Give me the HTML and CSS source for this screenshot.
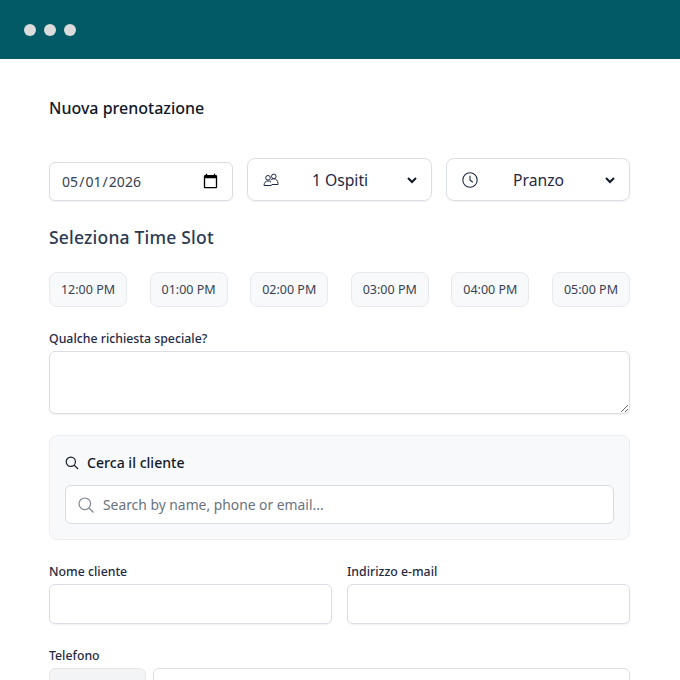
FILE: index.html
```html
<!DOCTYPE html>
<html lang="it">
<head>
    <meta charset="UTF-8">
    <meta name="viewport" content="width=device-width, initial-scale=1.0">
    <title>Nuova prenotazione</title>
    <link rel="stylesheet" href="styles.css">
</head>
<body>
    <header class="topbar">
        <span class="dot"></span>
        <span class="dot"></span>
        <span class="dot"></span>
    </header>

    <main class="content">
        <h1 class="page-title">Nuova prenotazione</h1>

        <div class="filters">
            <input class="date-input" type="date" value="2026-05-01">
            <div class="select-box">
                <svg class="select-icon" width="16" height="16" viewBox="0 0 16 16" fill="none" stroke="#1f2a44" stroke-width="1">
                    <circle cx="5" cy="5.800" r="2.300"/>
                    <circle cx="10.800" cy="4.400" r="2.300"/>
                    <path d="M1 13.500c0-2.600 1.600-4.600 4-4.600 1.200 0 2.200.5 3 1.300M1 13.500h7.500M7.600 8.300c.8-1 1.900-1.500 3.200-1.500 2.400 0 4.200 2 4.200 4.600v1.100H8.500"/>
                </svg>
                <span class="select-text">1 Ospiti</span>
                <svg class="chevron" width="12" height="8" viewBox="0 0 12 8" fill="none" stroke="#111827" stroke-width="2"><path d="M2 2l4 4 4-4"/></svg>
            </div>
            <div class="select-box">
                <svg class="select-icon" width="16" height="16" viewBox="0 0 16 16" fill="none" stroke="#1f2a44" stroke-width="1.100"><circle cx="8" cy="8" r="7.200"/><path d="M8 3.800V8l2.800 2.200"/></svg>
                <span class="select-text">Pranzo</span>
                <svg class="chevron" width="12" height="8" viewBox="0 0 12 8" fill="none" stroke="#111827" stroke-width="2"><path d="M2 2l4 4 4-4"/></svg>
            </div>
        </div>

        <h2 class="section-title">Seleziona Time Slot</h2>

        <div class="slots">
            <button class="slot">12:00 PM</button>
            <button class="slot">01:00 PM</button>
            <button class="slot">02:00 PM</button>
            <button class="slot">03:00 PM</button>
            <button class="slot">04:00 PM</button>
            <button class="slot">05:00 PM</button>
        </div>

        <label class="field-label" for="richiesta">Qualche richiesta speciale?</label>
        <textarea class="notes" id="richiesta"></textarea>

        <section class="search-panel">
            <div class="search-title">
                <svg width="14" height="14" viewBox="0 0 14 14" fill="none" stroke="#111827" stroke-width="1.200"><circle cx="5.800" cy="5.800" r="4.600"/><path d="M9.200 9.200 13 13"/></svg>
                <span>Cerca il cliente</span>
            </div>
            <div class="search-box">
                <svg width="16" height="16" viewBox="0 0 16 16" fill="none" stroke="#7b8494" stroke-width="1.200"><circle cx="6.800" cy="6.800" r="5.800"/><path d="M11 11l4.500 4.500"/></svg>
                <input class="search-input" type="text" placeholder="Search by name, phone or email...">
            </div>
        </section>

        <div class="two-cols">
            <div>
                <label class="field-label" for="nome">Nome cliente</label>
                <input class="text-input" id="nome" type="text">
            </div>
            <div>
                <label class="field-label" for="email">Indirizzo e-mail</label>
                <input class="text-input" id="email" type="text">
            </div>
        </div>

        <label class="field-label phone-label" for="telefono">Telefono</label>
        <div class="phone-row">
            <div class="prefix"></div>
            <input class="text-input" id="telefono" type="text">
        </div>
    </main>
</body>
</html>
```

FILE: styles.css
```css
* {
    box-sizing: border-box;
}
html, body {
    height: 680px;
    overflow: hidden;
}
body {
    margin: 0;
    font-family: "Noto Sans", sans-serif;
    background-color: #fff;
    color: #1f2a44;
}
.topbar {
    height: 59px;
    background-color: #025a66;
    padding-left: 24px;
    display: flex;
    align-items: center;
    gap: 8px;
}
.dot {
    width: 12px;
    height: 12px;
    border-radius: 50%;
    background-color: #dcdcdc;
}
.content {
    padding: 38px 50px 0 49px;
}
.page-title {
    margin: 0;
    font-size: 16px;
    line-height: 22px;
    font-weight: 500;
    color: #111827;
}
.filters {
    display: grid;
    grid-template-columns: 184px 185px 184px;
    justify-content: space-between;
    align-items: end;
    margin-top: 39px;
    height: 43px;
}
.date-input {
    height: 39px;
    padding: 0 12px 0 11px;
    border: 1px solid #dcdee6;
    border-radius: 6px;
    background: #fff;
    font-family: inherit;
    font-size: 14px;
    letter-spacing: 0.05px;
    color: #374151;
    box-shadow: 0 1px 2px rgba(0, 0, 0, 0.06);
}
.date-input::-webkit-calendar-picker-indicator {
    width: 17px;
    height: 17px;
    padding: 0;
    margin-right: 1px;
}
.select-box {
    height: 43px;
    padding: 0 13px 0 15px;
    border: 1px solid #dcdee6;
    border-radius: 8px;
    display: flex;
    align-items: center;
    box-shadow: 0 1px 2px rgba(0, 0, 0, 0.06);
}
.select-text {
    flex: 1;
    padding-right: 5px;
    text-align: center;
    font-size: 15.700px;
}
.section-title {
    margin: 24px 0 0;
    font-size: 17.500px;
    line-height: 24px;
    font-weight: 500;
    letter-spacing: 0.2px;
    color: #2a3a52;
}
.slots {
    display: flex;
    justify-content: space-between;
    margin-top: 23px;
}
.slot {
    width: 78px;
    height: 35px;
    padding: 0;
    border: 1px solid #e7e9ef;
    border-radius: 8px;
    background-color: #f8f9fb;
    font-family: inherit;
    font-size: 12.500px;
    color: #374151;
}
.field-label {
    display: block;
    font-size: 12.300px;
    line-height: 16px;
    font-weight: 500;
    color: #1f2a44;
}
.slots + .field-label {
    margin-top: 24px;
}
.notes {
    display: block;
    width: 100%;
    height: 63px;
    margin-top: 4px;
    border: 1px solid #dcdee6;
    border-radius: 6px;
    box-shadow: 0 1px 2px rgba(0, 0, 0, 0.06);
}
.search-panel {
    height: 105px;
    margin-top: 21px;
    padding: 15px;
    border: 1px solid #eceef2;
    border-radius: 8px;
    background-color: #f8f9fb;
}
.search-title {
    display: flex;
    align-items: center;
    gap: 8px;
    height: 23px;
    margin-bottom: 11px;
    font-size: 14.100px;
    font-weight: 500;
    color: #111827;
}
.search-box {
    height: 39px;
    padding: 0 12px;
    display: flex;
    align-items: center;
    gap: 9px;
    border: 1px solid #d9dbe3;
    border-radius: 6px;
    background-color: #fff;
}
.search-input {
    flex: 1;
    padding-left: 0;
    border: none;
    outline: none;
    background: none;
    font-family: inherit;
    font-size: 13.850px;
}
.search-input::placeholder {
    color: #6b7280;
}
.two-cols {
    display: grid;
    grid-template-columns: 283px 283px;
    justify-content: space-between;
    margin-top: 24px;
}
.text-input {
    display: block;
    width: 100%;
    height: 40px;
    margin-top: 4px;
    border: 1px solid #dcdee6;
    border-radius: 6px;
    box-shadow: 0 1px 2px rgba(0, 0, 0, 0.06);
}
.phone-label {
    margin-top: 24px;
}
.phone-row {
    display: flex;
    gap: 7px;
    margin-top: 4px;
}
.phone-row .text-input {
    flex: 1;
    margin-top: 0;
}
.prefix {
    width: 97px;
    height: 40px;
    border: 1px solid #e5e7eb;
    border-radius: 6px;
    background-color: #f3f4f6;
}
```
